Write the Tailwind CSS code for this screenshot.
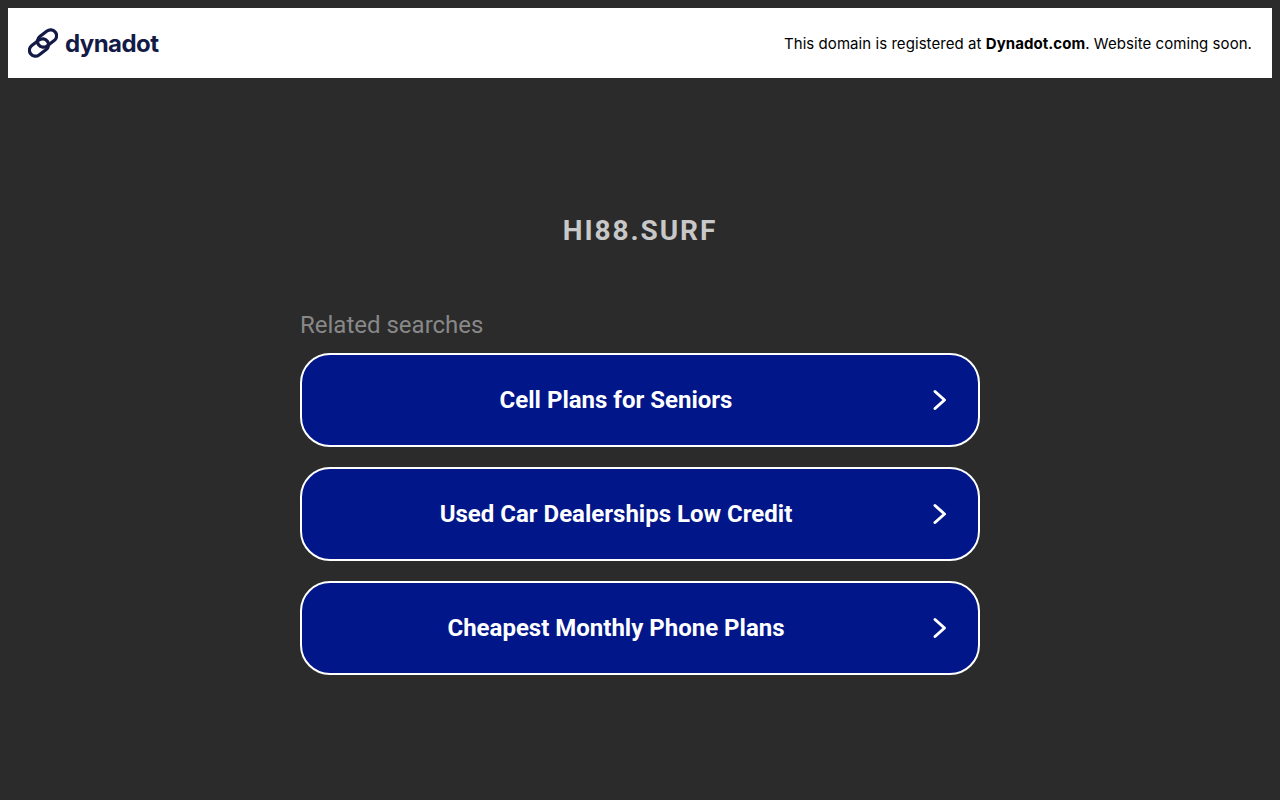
<!DOCTYPE html>
<html lang="en">

<head>
    <meta charset="UTF-8">
    <meta name="viewport" content="width=device-width, initial-scale=1.0">
    <title>hi88.surf</title>
    <script src="https://cdn.jsdelivr.net/npm/@tailwindcss/browser@4"></script>
</head>

<body class="bg-[#2b2b2b] h-screen overflow-hidden font-['Roboto',sans-serif]">
    <!-- top banner -->
    <div class="p-2">
        <div class="bg-white h-[70px] flex items-center justify-between pl-5 pr-5">
            <div class="flex items-center gap-[7px]">
                <svg width="30" height="30" viewBox="0 0 30 30" fill="none" stroke="#141a46" stroke-width="3.2">
                    <rect x="8.500" y="4.500" width="21" height="12" rx="6" transform="rotate(-37 19 10.500)" />
                    <rect x="0.500" y="13.500" width="21" height="12" rx="6" transform="rotate(-37 11 19.500)" />
                </svg>
                <span class="font-['Inter',sans-serif] font-bold text-[24px] tracking-[-0.55px] leading-[30px] mt-[1px] text-[#141a46]">dynadot</span>
            </div>
            <p class="font-['Inter',sans-serif] text-[15px] tracking-[0.06px] mt-[2px] text-black">This domain is registered at <b>Dynadot.com</b>. Website coming soon.</p>
        </div>
    </div>

    <div class="w-[680px] mx-auto">
        <h1 class="text-center font-bold text-[28px] tracking-[1.9px] text-[#c8c8c8] mt-[126px] leading-[38px]">HI88.SURF</h1>
        <h2 class="text-[24px] leading-[30px] text-[#888888] mt-[60px] mb-[14px]">Related searches</h2>
        <div class="flex flex-col gap-5 -mt-[1px]">
            <a class="h-[94px] flex items-center bg-[#001689] border-2 border-white rounded-[30px] text-white font-bold text-[24px]">
                <span class="flex-1 text-center pl-[20px]">Cell Plans for Seniors</span>
                <svg class="mr-[30px] ml-[18px]" width="20" height="24" viewBox="0 0 20 24" fill="none" stroke="white" stroke-width="3" stroke-linecap="round" stroke-linejoin="round"><path d="M7 3.500l9.500 8.500-9.500 8.500" /></svg>
            </a>
            <a class="h-[94px] flex items-center bg-[#001689] border-2 border-white rounded-[30px] text-white font-bold text-[24px]">
                <span class="flex-1 text-center pl-[20px]">Used Car Dealerships Low Credit</span>
                <svg class="mr-[30px] ml-[18px]" width="20" height="24" viewBox="0 0 20 24" fill="none" stroke="white" stroke-width="3" stroke-linecap="round" stroke-linejoin="round"><path d="M7 3.500l9.500 8.500-9.500 8.500" /></svg>
            </a>
            <a class="h-[94px] flex items-center bg-[#001689] border-2 border-white rounded-[30px] text-white font-bold text-[24px]">
                <span class="flex-1 text-center pl-[20px]">Cheapest Monthly Phone Plans</span>
                <svg class="mr-[30px] ml-[18px]" width="20" height="24" viewBox="0 0 20 24" fill="none" stroke="white" stroke-width="3" stroke-linecap="round" stroke-linejoin="round"><path d="M7 3.500l9.500 8.500-9.500 8.500" /></svg>
            </a>
        </div>
    </div>
</body>

</html>
